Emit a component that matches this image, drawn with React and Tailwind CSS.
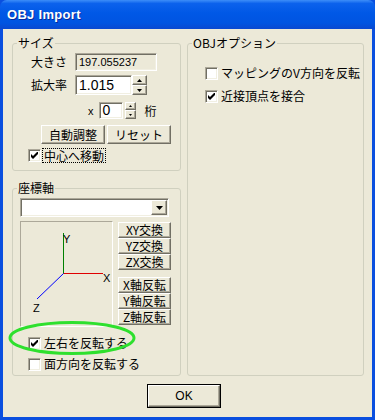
import React from 'react';

const sunken =
  'border border-t-[#aca899] border-l-[#aca899] border-b-white border-r-white shadow-[inset_1px_1px_0_#716f64,inset_-1px_-1px_0_#f1efe2]';
const raised =
  'border border-t-white border-l-white border-b-[#716f64] border-r-[#716f64] shadow-[inset_-1px_-1px_0_#aca899] bg-[#ece9d8]';

const Check = ({ checked }) => (
  <span className={`w-[13px] h-[13px] bg-white shrink-0 flex items-center justify-center ${sunken}`}>
    {checked && (
      <svg width="7" height="7" viewBox="0 0 7 7">
        <polygon points="0,2 2,4 7,-1 7,2 2,7 0,5" fill="#000" />
      </svg>
    )}
  </span>
);

const Arrow = ({ up, size = 5 }) => (
  <svg width={size} height={Math.ceil(size / 2)} viewBox={`0 0 ${size} ${Math.ceil(size / 2)}`}>
    {up ? (
      <polygon points={`0,${Math.ceil(size / 2)} ${size},${Math.ceil(size / 2)} ${size / 2},0`} fill="#000" />
    ) : (
      <polygon points={`0,0 ${size},0 ${size / 2},${Math.ceil(size / 2)}`} fill="#000" />
    )}
  </svg>
);

const Btn = ({ children, className }) => (
  <div className={`${raised} flex items-center justify-center text-[12px] leading-[14px] text-black ${className}`}>
    {children}
  </div>
);

const CheckRow = ({ checked, children, className }) => (
  <div className={`flex items-center ${className}`}>
    <Check checked={checked} />
    <span className="ml-[3px] text-[12px] leading-[14px] text-black">{children}</span>
  </div>
);

const Group = ({ title, className, children }) => (
  <fieldset className={`border border-[#d0d0bf] rounded-[3px] p-0 m-0 min-w-0 ${className}`}>
    <legend className="ml-[4px] px-[1px] text-[12px] leading-[12px] text-black">{title}</legend>
    {children}
  </fieldset>
);

const App = () => {
  return (
    <div className="w-[375px] h-[420px] flex flex-col bg-[#0a4fdf] font-['Noto_Sans_CJK_JP','Noto_Sans',sans-serif] select-none">
      {/* title bar */}
      <div className="h-[29px] shrink-0 rounded-t-[7px] bg-[linear-gradient(to_bottom,#3d8ef8_0%,#0c62ec_12%,#0058e6_45%,#0054e1_80%,#0a48d0_100%)] flex items-center pl-[7px]">
        <span className="text-white font-bold text-[13px] tracking-[0.3px] font-['Liberation_Sans',sans-serif] [text-shadow:1px_1px_0_#0a2a9a]">
          OBJ Import
        </span>
      </div>

      {/* dialog body */}
      <div className="flex-1 mx-[3px] mb-[3px] bg-[#ece9d8] flex flex-col relative">
        <div className="flex pt-[8px] pl-[9px] gap-[6px]">
          {/* left column */}
          <div className="w-[169px] flex flex-col">
            <Group title="サイズ" className="h-[134px]">
              <div className="flex items-center mt-[4px] h-[18px]">
                <span className="w-[54px] text-right text-[12px] leading-[14px]">大きさ</span>
                <div className={`ml-[8px] w-[82px] h-[18px] bg-[#ece9d8] flex items-center pl-[3px] text-[11px] font-['Liberation_Sans',sans-serif] ${sunken}`}>
                  197.055237
                </div>
              </div>
              <div className="flex items-center mt-[4px] h-[20px]">
                <span className="w-[54px] text-right text-[12px] leading-[14px]">拡大率</span>
                <div className={`ml-[8px] w-[57px] h-[20px] bg-white flex items-center pl-[3px] text-[14px] font-['Liberation_Sans',sans-serif] ${sunken}`}>
                  1.015
                </div>
                <div className="w-[15px] h-[20px] flex flex-col">
                  <div className={`${raised} h-[10px] flex items-center justify-center`}><Arrow up size={5} /></div>
                  <div className={`${raised} h-[10px] flex items-center justify-center`}><Arrow size={5} /></div>
                </div>
              </div>
              <div className="flex items-center mt-[7px] h-[17px]">
                <span className="ml-[75px] text-[11px] leading-[12px] font-['Liberation_Sans',sans-serif]">x</span>
                <div className={`ml-[5px] w-[24px] h-[17px] bg-white flex items-center pl-[3px] text-[14px] font-['Liberation_Sans',sans-serif] ${sunken}`}>
                  0
                </div>
                <div className="ml-[2px] w-[11px] h-[17px] flex flex-col">
                  <div className={`${raised} h-[8px] flex items-center justify-center`}><Arrow up size={3} /></div>
                  <div className={`${raised} h-[9px] flex items-center justify-center`}><Arrow size={3} /></div>
                </div>
                <span className="ml-[9px] text-[12px] leading-[14px]">桁</span>
              </div>
              <div className="flex mt-[6px] ml-[28px] gap-[2px]">
                <Btn className="w-[64px] h-[19px]">自動調整</Btn>
                <Btn className="w-[64px] h-[19px]">リセット</Btn>
              </div>
              <div className="flex items-center mt-[5px] ml-[15px]">
                <Check checked />
                <span className="ml-[2px] px-[1px] text-[12px] leading-[13px] outline outline-1 outline-dotted outline-black">中心へ移動</span>
              </div>
            </Group>

            <Group title="座標軸" className="h-[194px] mt-[11px]">
              <div className={`mt-[4px] ml-[7px] w-[149px] h-[19px] bg-white flex justify-end items-stretch ${sunken}`}>
                <div className={`${raised} w-[16px] my-[1px] mr-[1px] flex items-center justify-center`}>
                  <Arrow size={7} />
                </div>
              </div>
              <div className="flex mt-[4px] ml-[7px]">
                <div className="w-[93px] h-[106px] border border-t-[#aca899] border-l-[#aca899] border-b-white border-r-white">
                  <svg width="91" height="104" viewBox="0 0 91 104" className="font-['Liberation_Sans',sans-serif]">
                    <line x1="42.5" y1="11" x2="42.5" y2="52" stroke="#008000" strokeWidth="1" />
                    <line x1="42.5" y1="51.5" x2="82" y2="51.5" stroke="#e00000" strokeWidth="1" />
                    <line x1="42.5" y1="51.5" x2="16" y2="77" stroke="#0000ff" strokeWidth="1" />
                    <text x="42" y="21" fontSize="11" fill="#000">Y</text>
                    <text x="82" y="60" fontSize="11" fill="#000">X</text>
                    <text x="12" y="90" fontSize="11" fill="#000">Z</text>
                  </svg>
                </div>
                <div className="ml-[5px] w-[53px] flex flex-col pt-[1px]">
                  <Btn className="h-[16px]">XY交換</Btn>
                  <Btn className="h-[16px]">YZ交換</Btn>
                  <Btn className="h-[16px]">ZX交換</Btn>
                  <Btn className="h-[16px] mt-[7px]">X軸反転</Btn>
                  <Btn className="h-[16px]">Y軸反転</Btn>
                  <Btn className="h-[16px]">Z軸反転</Btn>
                </div>
              </div>
              <CheckRow checked className="mt-[9px] ml-[15px]">左右を反転する</CheckRow>
              <CheckRow className="mt-[7px] ml-[15px]">面方向を反転する</CheckRow>
            </Group>
          </div>

          {/* right column */}
          <Group title="OBJオプション" className="w-[177px] h-[339px]">
            <CheckRow className="mt-[17px] ml-[17px]">マッピングのV方向を反転</CheckRow>
            <CheckRow checked className="mt-[9px] ml-[17px]">近接頂点を接合</CheckRow>
          </Group>
        </div>

        <div className="mt-[8px] ml-[144px] w-[74px] h-[24px] border border-black">
          <Btn className="w-full h-full text-[11px] font-['Liberation_Sans',sans-serif]">OK</Btn>
        </div>

        {/* highlight ellipse drawn over the dialog */}
        <svg className="absolute left-[5px] top-[291px] pointer-events-none" width="130" height="36" viewBox="0 0 130 36">
          <ellipse cx="64" cy="18" rx="62" ry="15.5" fill="none" stroke="#2ee02e" strokeWidth="3" />
        </svg>
      </div>
    </div>
  );
};

export default App;
